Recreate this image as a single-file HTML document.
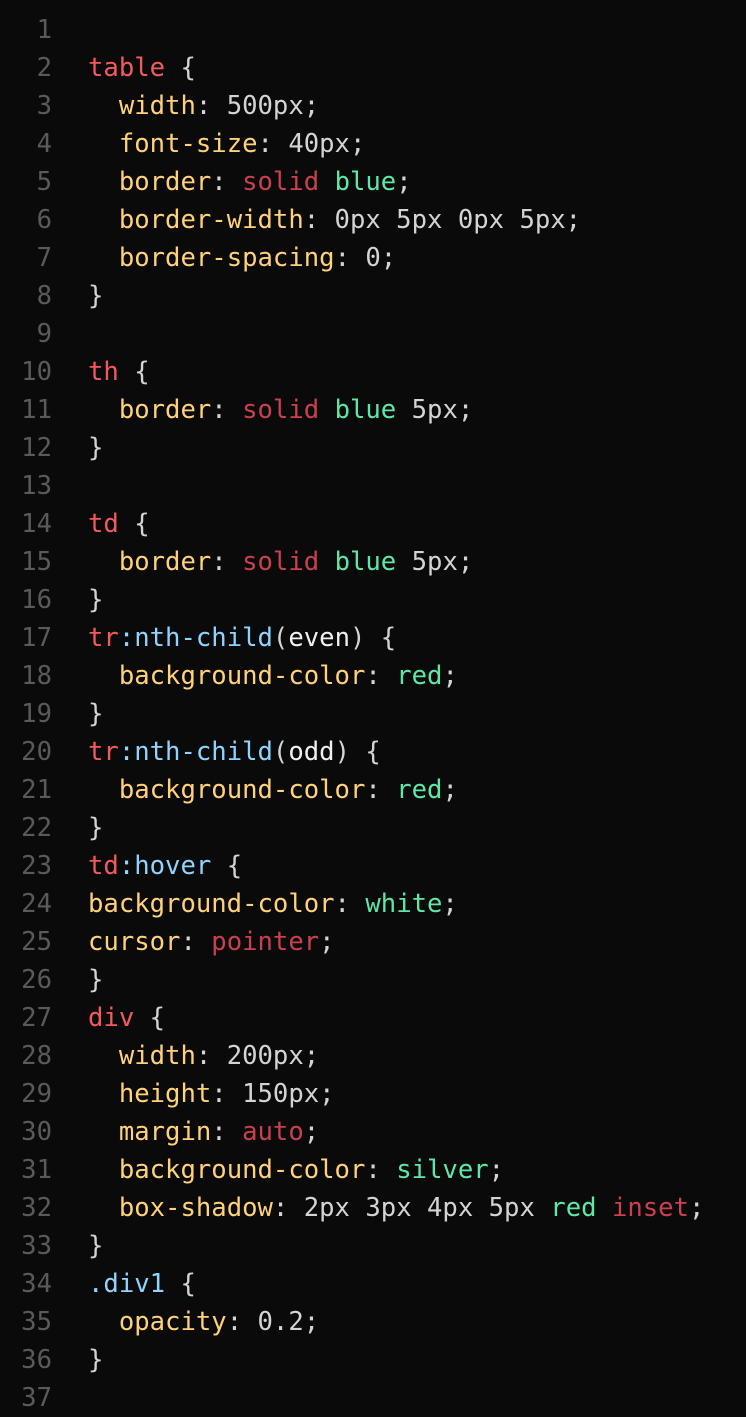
<!DOCTYPE html>
<html><head><meta charset="utf-8"><style>
html,body{margin:0;padding:0;background:#0a0a0a;width:746px;height:1412px;overflow:hidden}
.c{position:absolute;top:11px;left:0;font-family:"DejaVu Sans Mono","Liberation Mono",monospace;font-size:25.6px;line-height:38px;color:#d4d4d4}
.l{height:38px;white-space:pre}
.n{display:inline-block;width:52px;text-align:right;color:#5a5a5a;margin-right:36px}
.s{color:#f25a5e}.p{color:#ffd27a}.k{color:#c9404e}.g{color:#5ee8a8}.b{color:#8fd3ff}.w{color:#f0f0f0}
</style></head><body><div class="c"><div class="l"><span class="n">1</span></div><div class="l"><span class="n">2</span><span class="s">table</span> {</div><div class="l"><span class="n">3</span>  <span class="p">width</span>: 500px;</div><div class="l"><span class="n">4</span>  <span class="p">font-size</span>: 40px;</div><div class="l"><span class="n">5</span>  <span class="p">border</span>: <span class="k">solid</span> <span class="g">blue</span>;</div><div class="l"><span class="n">6</span>  <span class="p">border-width</span>: 0px 5px 0px 5px;</div><div class="l"><span class="n">7</span>  <span class="p">border-spacing</span>: 0;</div><div class="l"><span class="n">8</span>}</div><div class="l"><span class="n">9</span></div><div class="l"><span class="n">10</span><span class="s">th</span> {</div><div class="l"><span class="n">11</span>  <span class="p">border</span>: <span class="k">solid</span> <span class="g">blue</span> 5px;</div><div class="l"><span class="n">12</span>}</div><div class="l"><span class="n">13</span></div><div class="l"><span class="n">14</span><span class="s">td</span> {</div><div class="l"><span class="n">15</span>  <span class="p">border</span>: <span class="k">solid</span> <span class="g">blue</span> 5px;</div><div class="l"><span class="n">16</span>}</div><div class="l"><span class="n">17</span><span class="s">tr</span><span class="b">:nth-child</span>(<span class="w">even</span>) {</div><div class="l"><span class="n">18</span>  <span class="p">background-color</span>: <span class="g">red</span>;</div><div class="l"><span class="n">19</span>}</div><div class="l"><span class="n">20</span><span class="s">tr</span><span class="b">:nth-child</span>(<span class="w">odd</span>) {</div><div class="l"><span class="n">21</span>  <span class="p">background-color</span>: <span class="g">red</span>;</div><div class="l"><span class="n">22</span>}</div><div class="l"><span class="n">23</span><span class="s">td</span><span class="b">:hover</span> {</div><div class="l"><span class="n">24</span><span class="p">background-color</span>: <span class="g">white</span>;</div><div class="l"><span class="n">25</span><span class="p">cursor</span>: <span class="k">pointer</span>;</div><div class="l"><span class="n">26</span>}</div><div class="l"><span class="n">27</span><span class="s">div</span> {</div><div class="l"><span class="n">28</span>  <span class="p">width</span>: 200px;</div><div class="l"><span class="n">29</span>  <span class="p">height</span>: 150px;</div><div class="l"><span class="n">30</span>  <span class="p">margin</span>: <span class="k">auto</span>;</div><div class="l"><span class="n">31</span>  <span class="p">background-color</span>: <span class="g">silver</span>;</div><div class="l"><span class="n">32</span>  <span class="p">box-shadow</span>: 2px 3px 4px 5px <span class="g">red</span> <span class="k">inset</span>;</div><div class="l"><span class="n">33</span>}</div><div class="l"><span class="n">34</span><span class="b">.div1</span> {</div><div class="l"><span class="n">35</span>  <span class="p">opacity</span>: 0.2;</div><div class="l"><span class="n">36</span>}</div><div class="l"><span class="n">37</span></div></div></body></html>
